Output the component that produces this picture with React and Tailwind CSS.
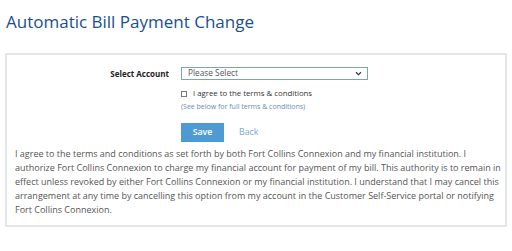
import React from 'react'

const App = () => {
  return (
    <div className="bg-white w-[512px] h-[251px] overflow-hidden" style={{ fontFamily: '"Open Sans", "Noto Sans", sans-serif' }}>
      <div className="h-[53px] pl-[6px] pt-[10px]">
        <h1 className="text-[17px] leading-[24px] text-[#1b4f91]">Automatic Bill Payment Change</h1>
      </div>

      {/* Form panel */}
      <div className="mx-[5px] border-2 border-[#e2e7e6] pt-[12px] pb-[8px]">
        <div className="flex items-center h-[13px]">
          <label className="w-[162px] text-right text-[8px] font-bold text-[#222]">Select Account</label>
          <div className="ml-[12px] w-[187px] h-[13px] border border-[#7ba3c8] flex items-center justify-between pl-[6px] pr-[5px] text-[8.3px] text-[#555]">
            <span>Please Select</span>
            <svg width="7" height="5" viewBox="0 0 8 6"><path d="M1 1.5 L4 4.5 L7 1.5" fill="none" stroke="#333" strokeWidth="1.3" /></svg>
          </div>
        </div>

        <div className="ml-[174px] mt-[8px] h-[11px] flex items-center gap-[6px] text-[7.8px] text-[#333]">
          <span className="w-[6px] h-[6px] border border-[#777] inline-block"></span>
          <span>I agree to the terms &amp; conditions</span>
        </div>
        <div className="ml-[174px] mt-[3px] h-[10px] leading-[10px] text-[7px] text-[#6b8cae]">(See below for full terms &amp; conditions)</div>

        <div className="ml-[174px] mt-[11px] flex items-center gap-[15px]">
          <button className="w-[43px] h-[19px] bg-[#4e9bd3] text-white text-[8.8px] font-semibold">Save</button>
          <a className="text-[8.8px] text-[#7aa7d6]">Back</a>
        </div>

        <p className="mt-[5px] pl-[8px] pr-[2px] text-[9px] leading-[14px] text-[#555]">
          I agree to the terms and conditions as set forth by both Fort Collins Connexion and my financial institution. I authorize Fort Collins Connexion to charge my financial account for payment of my bill. This authority is to remain in effect unless revoked by either Fort Collins Connexion or my financial institution. I understand that I may cancel this arrangement at any time by cancelling this option from my account in the Customer Self-Service portal or notifying Fort Collins Connexion.
        </p>
      </div>
    </div>
  )
}

export default App
